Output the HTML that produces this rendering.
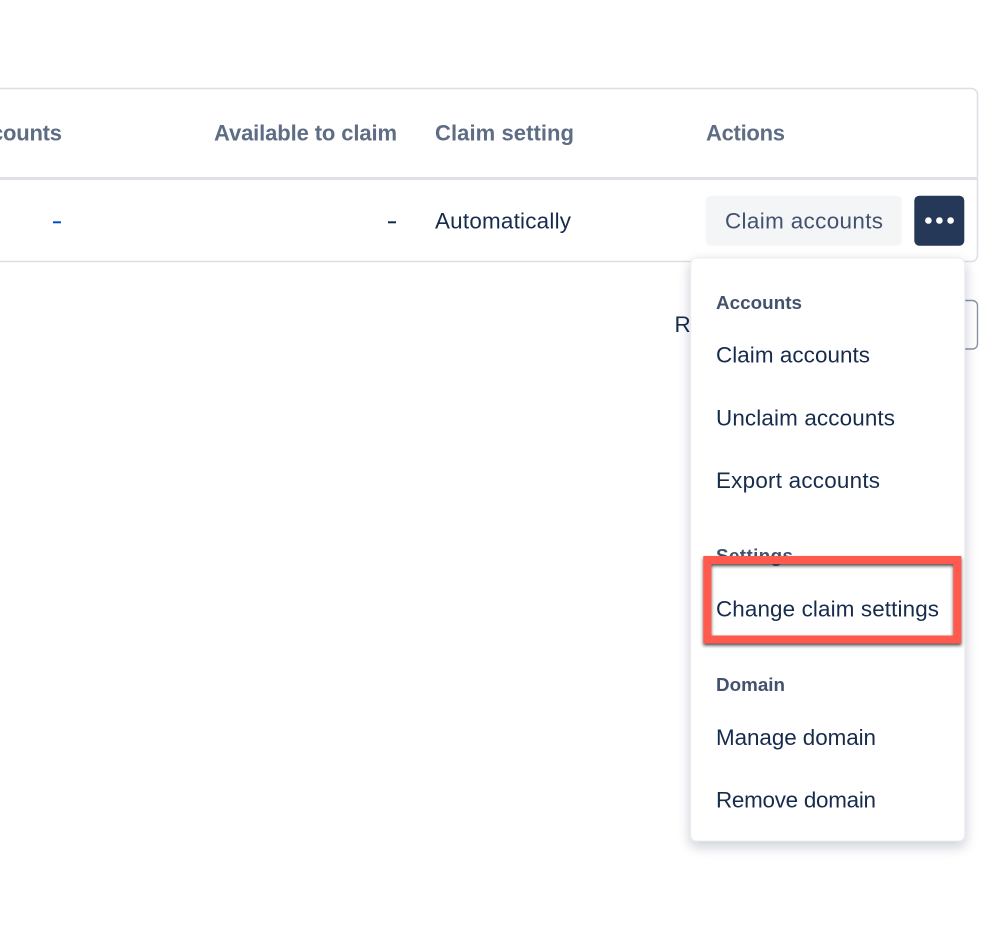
<!DOCTYPE html>
<html lang="en">
<head>
<meta charset="utf-8">
<title>Domain claim actions</title>
<style>
html,body{margin:0;padding:0;background:#fff;width:999px;height:930px;overflow:hidden}
svg{display:block}
text{font-family:"Liberation Sans",sans-serif;font-size:22.4px;fill:#172b4d}
.h{font-weight:700;font-size:22px;fill:#5e6c84}
.g{font-weight:700;font-size:18.8px;fill:#42526e}
</style>
</head>
<body>
<svg xmlns="http://www.w3.org/2000/svg" width="999" height="930" viewBox="0 0 999 930">
<defs>
<filter id="menu" x="-20%" y="-10%" width="140%" height="120%">
<feDropShadow dx="0" dy="5" stdDeviation="6" flood-color="#091e42" flood-opacity="0.22"/>
</filter>
<filter id="frame" x="-5%" y="-15%" width="110%" height="130%">
<feDropShadow dx="0" dy="2" stdDeviation="1.5" flood-color="#222" flood-opacity="0.8"/>
</filter>
</defs>

<rect x="-20" y="88.5" width="997.5" height="173" rx="6" fill="#fff" stroke="#dcdfe4" stroke-width="1.5"/>
<rect x="0" y="177" width="977" height="3" fill="#dfe1e6"/>

<text class="h" x="-9" y="140.5" textLength="71" lengthAdjust="spacing">counts</text>
<text class="h" x="214" y="140.5" textLength="183" lengthAdjust="spacing">Available to claim</text>
<text class="h" x="435" y="140.5" textLength="139" lengthAdjust="spacing">Claim setting</text>
<text class="h" x="706" y="140.5" textLength="79" lengthAdjust="spacing">Actions</text>

<rect x="53" y="221.3" width="8" height="2" fill="#0052cc"/>
<rect x="388" y="221.3" width="8" height="2" fill="#172b4d"/>
<text x="435" y="228.5" textLength="136" lengthAdjust="spacing">Automatically</text>

<rect x="705.7" y="195.7" width="196" height="50" rx="5" fill="#f4f5f7"/>
<text x="725" y="228.5" textLength="158" lengthAdjust="spacing" style="fill:#42526e">Claim accounts</text>

<rect x="914.3" y="195.7" width="50" height="50" rx="5" fill="#253858"/>
<circle cx="928.4" cy="220.5" r="3.3" fill="#fff"/>
<circle cx="939.4" cy="220.5" r="3.3" fill="#fff"/>
<circle cx="950.6" cy="220.5" r="3.3" fill="#fff"/>

<rect x="940" y="300.5" width="37.5" height="48.5" rx="5" fill="#fff" stroke="#8993a4" stroke-width="1.4"/>
<text x="674.5" y="332">Re</text>

<rect x="690.7" y="258" width="274" height="583" rx="6" fill="#fff" stroke="#ebecf0" stroke-width="1" filter="url(#menu)"/>

<text class="g" x="716" y="309" textLength="86" lengthAdjust="spacing">Accounts</text>
<text x="716" y="362.5" textLength="154" lengthAdjust="spacing">Claim accounts</text>
<text x="716" y="425.5" textLength="179" lengthAdjust="spacing">Unclaim accounts</text>
<text x="716" y="488" textLength="164" lengthAdjust="spacing">Export accounts</text>
<text class="g" x="716" y="562" textLength="77" lengthAdjust="spacing">Settings</text>
<text x="716" y="616.5" textLength="223" lengthAdjust="spacing">Change claim settings</text>
<text class="g" x="716" y="691" textLength="69" lengthAdjust="spacing">Domain</text>
<text x="716" y="745" textLength="160" lengthAdjust="spacing">Manage domain</text>
<text x="716" y="807.5" textLength="160" lengthAdjust="spacing">Remove domain</text>

<rect x="707.3" y="560" width="250" height="79.5" fill="none" stroke="#ff5a4d" stroke-width="8" filter="url(#frame)"/>
</svg>
</body>
</html>
